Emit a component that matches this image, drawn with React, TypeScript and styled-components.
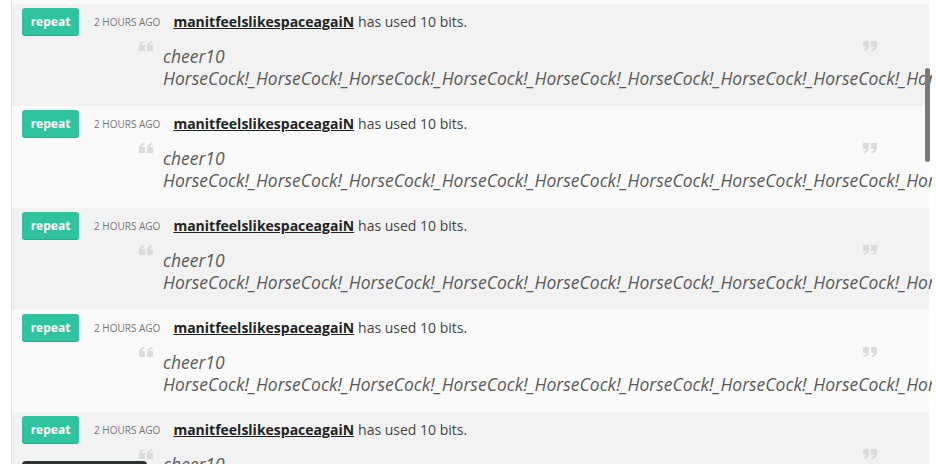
import { useLayoutEffect, useRef } from "react";
import styled, { createGlobalStyle } from "styled-components";

const GlobalStyle = createGlobalStyle`
  html, body {
    margin: 0;
    padding: 0;
    background: #fff;
    overflow: hidden;
  }
  body {
    font-family: "Open Sans", "DejaVu Sans", sans-serif;
  }
`;

const Viewport = styled.div`
  position: relative;
  height: 100vh;
  width: 920px;
  margin-left: 11px;
  border-left: 1px solid #e4e4e4;
  overflow-y: scroll;
  overflow-x: hidden;
  scrollbar-width: none;
  &::-webkit-scrollbar {
    display: none;
  }
`;

const EventList = styled.ul`
  list-style: none;
  margin: 0 3px 0 0;
  padding: 0;
`;

const EventRow = styled.li`
  padding: 4px 0 17px;
  background: #fafafa;
  &:nth-child(even) {
    background: #f2f2f2;
  }
`;

const EventHeader = styled.div`
  display: flex;
  align-items: center;
  padding-left: 10px;
  height: 27px;
`;

const RepeatButton = styled.button`
  height: 27px;
  width: 57px;
  padding: 0;
  border: 0;
  border-radius: 3px;
  background: #2fc39f;
  box-shadow: 0 1px 0 #28ad8c;
  color: #fff;
  font-family: "Open Sans", sans-serif;
  font-size: 12px;
  font-weight: 700;
  cursor: pointer;
`;

const TimeAgo = styled.span`
  margin-left: 15px;
  font-size: 10px;
  color: #777;
  text-transform: uppercase;
  white-space: nowrap;
`;

const Summary = styled.span`
  margin-left: 13px;
  font-size: 14px;
  line-height: 20px;
  color: #444;
  white-space: nowrap;
`;

const UserName = styled.a`
  font-weight: 700;
  color: #222;
  text-decoration: underline;
  margin-right: 4px;
`;

const Quote = styled.div`
  display: flex;
  align-items: flex-start;
  gap: 10px;
  margin-top: 10px;
  padding: 0 52px 0 127px;
`;

const QuoteMark = styled.svg<{ $flip?: boolean }>`
  flex: none;
  width: 14px;
  height: 10px;
  margin-top: -4px;
  fill: #dcdcdc;
  transform: ${(p) => (p.$flip ? "rotate(180deg)" : "none")};
`;

const Message = styled.p`
  flex: 1;
  min-width: 0;
  margin: 0;
  font-size: 17.5px;
  line-height: 22px;
  font-style: italic;
  color: #5a5a5a;
`;

const ScrollThumb = styled.div`
  position: fixed;
  left: 925px;
  top: 68px;
  width: 5px;
  height: 94px;
  border-radius: 3px;
  background: #7a7a7a;
`;

const Toast = styled.div`
  position: fixed;
  left: 22px;
  top: 461px;
  width: 125px;
  height: 40px;
  border-radius: 4px;
  background: #2e3434;
`;

function Mark({ flip }: { flip?: boolean }) {
  return (
    <QuoteMark $flip={flip} viewBox="0 0 14 10">
      <path d="M0 10V5.6C0 2.6 1.8.7 5 0l.6 1.3C4 1.9 3.1 2.8 3 4.1h3V10Z" />
      <path d="M8 10V5.6C8 2.6 9.8.7 13 0l.6 1.3C12 1.9 11.1 2.8 11 4.1h3V10Z" />
    </QuoteMark>
  );
}

const message = "cheer10 " + "HorseCock!_".repeat(12);

const events = Array.from({ length: 22 }, (_, i) => ({
  id: i,
  time: "2 hours ago",
  user: "manitfeelslikespaceagaiN",
  bits: 10,
  message,
}));

export default function App() {
  const viewport = useRef<HTMLDivElement>(null);

  useLayoutEffect(() => {
    if (viewport.current) viewport.current.scrollTop = 98;
  }, []);

  return (
    <>
      <GlobalStyle />
      <Viewport ref={viewport}>
        <EventList>
          {events.map((e) => (
            <EventRow key={e.id}>
              <EventHeader>
                <RepeatButton>repeat</RepeatButton>
                <TimeAgo>{e.time}</TimeAgo>
                <Summary>
                  <UserName>{e.user}</UserName>
                  has used {e.bits} bits.
                </Summary>
              </EventHeader>
              <Quote>
                <Mark />
                <Message>{e.message}</Message>
                <Mark flip />
              </Quote>
            </EventRow>
          ))}
        </EventList>
      </Viewport>
      <ScrollThumb />
      <Toast />
    </>
  );
}
